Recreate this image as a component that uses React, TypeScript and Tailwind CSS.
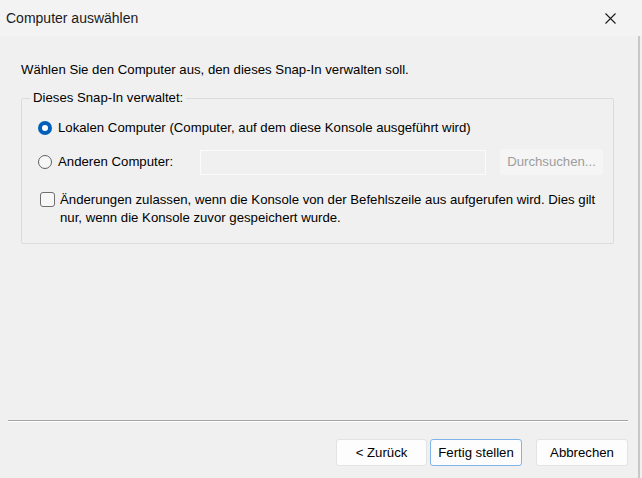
import React from "react";

export default function App() {
  const font = { fontFamily: '"Liberation Sans", Arial, sans-serif' };
  return (
    <div className="w-[642px] h-[478px] bg-[#f0f0f0] flex flex-col text-[13.2px] text-black overflow-hidden" style={font}>
      <div className="h-[36px] shrink-0 bg-[#f3f3f3] flex items-center justify-between pl-[6px] pr-[26px]">
        <span className="text-[14px] text-[#1a1a1a]">Computer auswählen</span>
        <svg width="11" height="11" viewBox="0 0 11 11" className="block">
          <path d="M0.5 0.5 L10.5 10.5 M10.5 0.5 L0.5 10.5" stroke="#1a1a1a" strokeWidth="1.1" />
        </svg>
      </div>
      <div className="flex-1 flex flex-col border-r-2 border-[#c8c8c8] mr-[2px]">
        <div className="pl-[21px] pt-[26px] leading-[16px]">Wählen Sie den Computer aus, den dieses Snap-In verwalten soll.</div>
        <div className="relative ml-[21px] mr-[24px] mt-[20px] h-[146px] border border-[#dcdcdc] rounded-[2px]">
          <span className="absolute left-[8px] top-[-9px] px-[3px] bg-[#f0f0f0] leading-[16px]">Dieses Snap-In verwaltet:</span>
          <div className="flex items-center mt-[19px] ml-[16px] h-[20px]">
            <span className="w-[14px] h-[14px] rounded-full bg-[#005fb8] flex items-center justify-center">
              <span className="w-[6px] h-[6px] rounded-full bg-white" />
            </span>
            <span className="ml-[6px]">Lokalen Computer (Computer, auf dem diese Konsole ausgeführt wird)</span>
          </div>
          <div className="flex items-center mt-[11px] ml-[16px] h-[26px]">
            <span className="w-[14px] h-[14px] rounded-full border border-[#616161] bg-[#f7f7f7]" />
            <span className="ml-[6px] w-[142px]">Anderen Computer:</span>
            <div className="w-[286px] h-[25px] border border-[#fbfbfb] bg-[#f0f0f0]" />
            <div className="ml-[14px] w-[103px] h-[26px] rounded-[3px] bg-[#f5f5f5] text-[#9d9d9d] flex items-center justify-center">Durchsuchen...</div>
          </div>
          <div className="flex mt-[16px] ml-[18px]">
            <span className="w-[15px] h-[15px] mt-[1px] rounded-[3px] border border-[#6f6f6f] bg-[#f7f7f7] shrink-0" />
            <span className="ml-[5px] leading-[18px] w-[545px]">Änderungen zulassen, wenn die Konsole von der Befehlszeile aus aufgerufen wird. Dies gilt nur, wenn die Konsole zuvor gespeichert wurde.</span>
          </div>
        </div>
        <div className="flex-1" />
        <div className="ml-[8px] mr-[10px] h-[2px] border-t border-[#a5a5a5] border-b border-b-white" />
        <div className="flex justify-end mt-[17px] mb-[12px] mr-[10px]">
          <button className="w-[91px] h-[27px] bg-[#fdfdfd] border border-[#e3e3e3] rounded-[3px] text-black" style={font}>&lt; Zurück</button>
          <button className="ml-[3px] w-[92px] h-[27px] bg-[#fdfdfd] border border-[#7fb4e8] rounded-[3px] text-black" style={font}>Fertig stellen</button>
          <button className="ml-[14px] w-[92px] h-[27px] bg-[#fdfdfd] border border-[#e3e3e3] rounded-[3px] text-black" style={font}>Abbrechen</button>
        </div>
      </div>
    </div>
  );
}
